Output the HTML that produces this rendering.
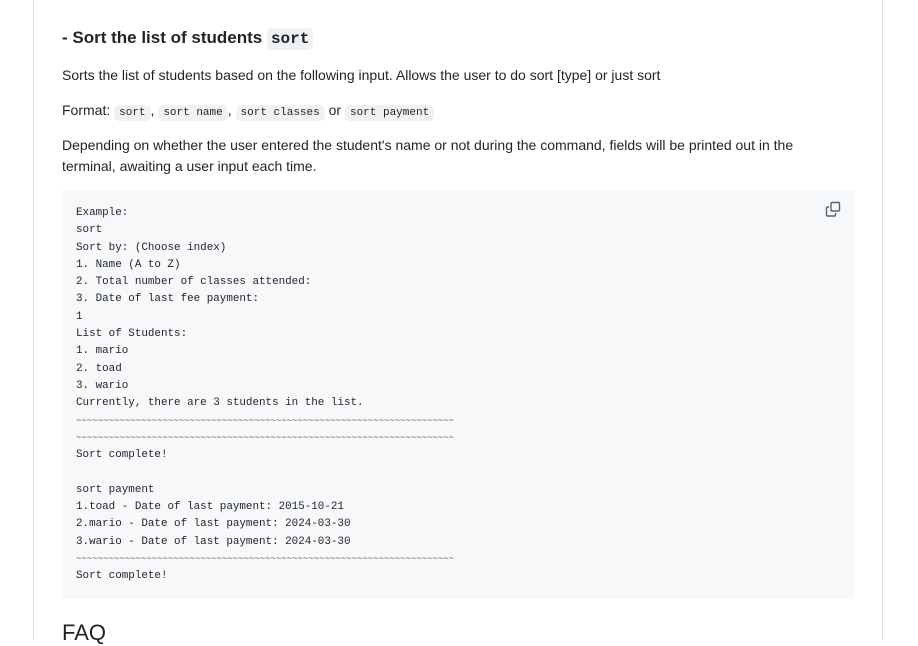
<!DOCTYPE html>
<html><head><style>
body{margin:0;background:#fff;width:918px;height:640px;overflow:hidden;font-family:"Liberation Sans",sans-serif;color:#1f2328;}
.wrap{position:absolute;left:33px;top:0;width:848px;height:640px;border-left:1px solid #d8dee4;border-right:1px solid #d8dee4;}
h3{position:absolute;left:28px;top:28px;margin:0;font-size:17px;font-weight:bold;}
code{font-family:"Liberation Mono",monospace;background:#eff1f3;border-radius:5px;padding:2px 5px;font-size:11px;}
h3 code{font-size:16px;padding:2px 4px;}
p{position:absolute;left:28px;margin:0;font-size:14px;line-height:21px;width:760px;}
pre{position:absolute;left:28px;top:190px;width:792px;height:409px;margin:0;background:#f6f8fa;box-sizing:border-box;padding:15px 14px;font-family:"Liberation Mono",monospace;font-size:10.9px;line-height:17.3px;color:#1f2328;}
.t{font-size:9px;color:#555;}
h2{position:absolute;left:28px;top:620px;margin:0;font-size:22px;font-weight:normal;}
</style></head><body>
<div class="wrap">
<h3>- Sort the list of students <code>sort</code></h3>
<p style="top:65px">Sorts the list of students based on the following input. Allows the user to do sort [type] or just sort</p>
<p style="top:100px">Format: <code>sort</code>, <code>sort name</code>, <code>sort classes</code> or <code>sort payment</code></p>
<p style="top:135px">Depending on whether the user entered the student's name or not during the command, fields will be printed out in the terminal, awaiting a user input each time.</p>
<pre>Example:
sort
Sort by: (Choose index)
1. Name (A to Z)
2. Total number of classes attended:
3. Date of last fee payment:
1
List of Students:
1. mario
2. toad
3. wario
Currently, there are 3 students in the list.
<span class="t">~~~~~~~~~~~~~~~~~~~~~~~~~~~~~~~~~~~~~~~~~~~~~~~~~~~~~~~~~~~~~~~~~~~~~~</span>
<span class="t">~~~~~~~~~~~~~~~~~~~~~~~~~~~~~~~~~~~~~~~~~~~~~~~~~~~~~~~~~~~~~~~~~~~~~~</span>
Sort complete!

sort payment
1.toad - Date of last payment: 2015-10-21
2.mario - Date of last payment: 2024-03-30
3.wario - Date of last payment: 2024-03-30
<span class="t">~~~~~~~~~~~~~~~~~~~~~~~~~~~~~~~~~~~~~~~~~~~~~~~~~~~~~~~~~~~~~~~~~~~~~~</span>
Sort complete!</pre>
<svg style="position:absolute;left:791px;top:201px" width="16" height="16" viewBox="0 0 16 16" fill="none" stroke="#59636e" stroke-width="1.4"><rect x="6" y="1.5" width="8.5" height="8.5" rx="1"/><path d="M4 6H2.5a1 1 0 0 0-1 1v7a1 1 0 0 0 1 1h7a1 1 0 0 0 1-1V12"/></svg>
<h2>FAQ</h2>
</div>
</body></html>
